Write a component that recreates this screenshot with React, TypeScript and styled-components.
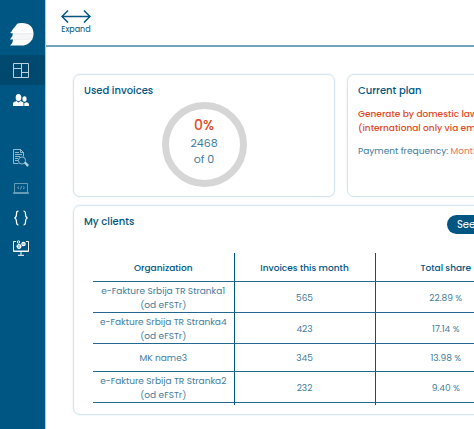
import React from "react";
import styled, { createGlobalStyle } from "styled-components";

const navy = "#005682";
const softNavy = "#3f7c9c";
const orange = "#e34a26";

const GlobalStyle = createGlobalStyle`
  *, *::before, *::after { box-sizing: border-box; }
  body {
    margin: 0;
    overflow-x: hidden;
    background: #fff;
    color: ${navy};
    font-family: Poppins, Inter, "Liberation Sans", sans-serif;
    font-size: 10px;
  }
`;

const Shell = styled.div`
  display: grid;
  grid-template-columns: 46px minmax(0, 1fr);
  min-height: 100vh;
`;

const Sidebar = styled.nav`
  display: flex;
  flex-direction: column;
  background: ${navy};
  border-right: 1px solid #9bd0e6;
`;

const Logo = styled.a`
  display: flex;
  justify-content: center;
  padding: 23px 1px 8px 0;
  height: 55px;
`;

const NavGroup = styled.div`
  display: flex;
  flex-direction: column;

  & + & {
    margin-top: 28px;
  }
`;

const NavLink = styled.a<{ $active?: boolean }>`
  display: flex;
  align-items: center;
  justify-content: center;
  height: 30px;
  padding-right: 4px;
  color: #fff;
  background: ${(p) => (p.$active ? "#00486d" : "transparent")};
`;

const Main = styled.main`
  min-width: 0;
`;

const TopBar = styled.header`
  display: flex;
  align-items: flex-start;
  height: 47px;
  padding: 9px 15px 0;
  border-bottom: 2px solid #6fa3be;
`;

const ExpandButton = styled.button`
  display: flex;
  flex-direction: column;
  align-items: center;
  gap: 1px;
  padding: 0;
  border: 0;
  background: none;
  color: ${navy};
  font: inherit;
  font-size: 8px;
  line-height: 12px;
  cursor: pointer;
`;

const Board = styled.div`
  display: grid;
  grid-template-columns: minmax(262px, 7fr) minmax(189px, 5fr);
  gap: 8px 12px;
  padding: 27px;
`;

const Card = styled.section<{ $wide?: boolean }>`
  min-width: 0;
  padding: 9px 10px;
  border: 1px solid #d3e4ed;
  border-radius: 7px;
  box-shadow: 0 0 2px #dcebf3;
  ${(p) => p.$wide && "grid-column: 1 / -1;"}
`;

const CardTitle = styled.h2`
  margin: 0;
  font-size: 10px;
  font-weight: 500;
  line-height: 14px;
`;

const Gauge = styled.div`
  display: flex;
  flex-direction: column;
  align-items: center;
  justify-content: center;
  width: 85px;
  height: 85px;
  margin: 4px auto 0;
  padding-bottom: 8px;
  border: 7px solid #d6d6d6;
  border-radius: 50%;
  color: ${softNavy};
  font-size: 11px;
  line-height: 16px;
`;

const Percent = styled.strong`
  color: ${orange};
  font-size: 14px;
  font-weight: 500;
  line-height: 20px;
`;

const Plan = styled.p<{ $accent?: boolean }>`
  margin: 9px 0 0;
  white-space: nowrap;
  font-size: 9px;
  line-height: 14px;
  font-weight: ${(p) => (p.$accent ? 500 : 400)};
  color: ${(p) => (p.$accent ? orange : softNavy)};

  span {
    color: #e8745a;
  }
`;

const CardHeader = styled.div`
  display: flex;
  justify-content: space-between;
  padding: 0 9px 0 0;
`;

const PillButton = styled.button`
  height: 19px;
  padding: 0 10px;
  min-width: 69px;
  border: 0;
  border-radius: 10px;
  background: ${navy};
  color: #fff;
  font: inherit;
  text-align: left;
  cursor: pointer;
`;

const TableArea = styled.div`
  padding: 19px 9px 0;
`;

const Table = styled.table`
  width: 100%;
  table-layout: fixed;
  border-collapse: collapse;

  th,
  td {
    padding: 2px 0 0;
    height: 28px;
    text-align: center;
    font-size: 9px;
    line-height: 14px;
    border-bottom: 1px solid #22698f;
    color: ${softNavy};
  }

  th {
    color: ${navy};
    font-weight: 500;
    white-space: nowrap;
  }

  th + th,
  td + td {
    border-left: 1px solid ${navy};
  }

  tfoot td {
    height: 3px;
    padding: 0;
    border-bottom: 0;
  }
`;

const LogoMark = () => (
  <svg width="24" height="23" viewBox="0 0 24 23" aria-hidden="true">
    <path d="M7 1Q8 0 12 0C19 0 23.500 4 23.500 10.500H3L0 10q1.500-1 3-4Q5 4 7 1z" fill="#fff" />
    <path d="M3 10h20.500q.2 3.500-1.200 6.500H0q3-3 3-6.500z" fill="#f4f6f7" />
    <path d="M3 16h19.300C20 20 17 22.500 12 22.500H0Q3 20 3 16z" fill="#fff" />
    <path d="M4 10.500Q12 11.500 23 10.500M4 16.500q8 .5 18-.5" fill="none" stroke="#dfe4e7" strokeWidth=".6" />
  </svg>
);

const DashboardIcon = () => (
  <svg width="16" height="15" viewBox="0 0 16 15" fill="none" stroke="#b9d2df" aria-hidden="true">
    <path d="M.5.5h15v14H.5zM8.500 .5v14M.5 5.500h8M8.500 9.500h7" />
  </svg>
);

const UsersIcon = () => (
  <svg width="16" height="13" viewBox="0 0 16 13" fill="#fff" aria-hidden="true">
    <ellipse cx="5.500" cy="3.500" rx="2.800" ry="3.500" />
    <path d="M0 12V9.500C0 8 2 7.500 3.500 7L5.500 8.500 7.500 7C9 7.500 10.500 8 10.500 9.500V12z" />
    <ellipse cx="11.500" cy="5" rx="2.100" ry="2.800" />
    <path d="M10 8.200l1.500 1 1.700-1c1.800.4 2.800 1 2.800 2.300V12h-4.700V9.500z" />
  </svg>
);

const SearchDocIcon = () => (
  <svg width="16" height="18" viewBox="0 0 16 18" fill="none" stroke="#b9d2df" strokeWidth=".8" aria-hidden="true">
    <path d="M5.500 14.500H.5V.5h7l3 3v4M7.500.5v3h3M2 3.500h4M2 5.500h7M2 7.500h5M2 9.500h3M2 11.500h3" />
    <circle cx="9" cy="11.500" r="3.600" />
    <path d="M11.500 14l1-1 3 3-1.200 1.400z" fill="#b9d2df" />
  </svg>
);

const LaptopIcon = () => (
  <svg width="16" height="11" viewBox="0 0 16 11" fill="none" stroke="#7fadc4" strokeWidth=".8" aria-hidden="true">
    <path d="M1.500 9V.5h13V9M.5 9.500h15v1H.5zM6 3.500L4.500 4.700 6 6M10 3.500l1.500 1.200L10 6M8.600 3L7.400 6.500" />
  </svg>
);

const BracesIcon = () => (
  <svg width="14" height="16" viewBox="0 0 14 16" fill="none" stroke="#fff" strokeWidth="1.200" aria-hidden="true">
    <path d="M4.500 1C2.500 1 2.500 2 2.500 4S2.500 7.500.5 8c2 .5 2 2 2 4s0 3 2 3M9.500 1c2 0 2 1 2 3s0 3.500 2 4c-2 .5-2 2-2 4s0 3-2 3" />
  </svg>
);

const MonitorIcon = () => (
  <svg width="16" height="16" viewBox="0 0 16 16" fill="none" stroke="#fff" aria-hidden="true">
    <path d="M3 1.500H.5v10h15v-10H13M.5 11h15M8 12v3M5 15.300h6" />
    <circle cx="6" cy="6.500" r="1.800" strokeWidth="1.300" />
    <circle cx="10.500" cy="4" r="1.600" strokeWidth="1.200" />
    <circle cx="5.500" cy="2" r="1.200" />
    <path d="M6 4v5M3.500 6.500h5M10.500 2v4M8.500 4h4" strokeWidth=".6" />
  </svg>
);

const ExpandIcon = () => (
  <svg width="30" height="14" viewBox="0 0 30 14" fill="none" stroke="currentColor" strokeWidth="1.500" aria-hidden="true">
    <path d="M1 7.500h28M7 1.500l-6 6 6 6M23 1.500l6 6-6 6" />
  </svg>
);

const clients = [
  { name: "e-Fakture Srbija TR Stranka1", note: "(od eFSTr)", invoices: 565, share: "22.89 %" },
  { name: "e-Fakture Srbija TR Stranka4", note: "(od eFSTr)", invoices: 423, share: "17.14 %" },
  { name: "MK name3", invoices: 345, share: "13.98 %" },
  { name: "e-Fakture Srbija TR Stranka2", note: "(od eFSTr)", invoices: 232, share: "9.40 %" },
];

export default function App() {
  return (
    <>
      <GlobalStyle />
      <Shell>
        <Sidebar aria-label="Main">
          <Logo href="#home" aria-label="Home"><LogoMark /></Logo>
          <NavGroup>
            <NavLink href="#dashboard" $active aria-label="Dashboard"><DashboardIcon /></NavLink>
            <NavLink href="#clients" aria-label="Clients"><UsersIcon /></NavLink>
          </NavGroup>
          <NavGroup>
            <NavLink href="#search" aria-label="Search documents"><SearchDocIcon /></NavLink>
            <NavLink href="#console" aria-label="Console"><LaptopIcon /></NavLink>
            <NavLink href="#api" aria-label="API"><BracesIcon /></NavLink>
            <NavLink href="#system" aria-label="System"><MonitorIcon /></NavLink>
          </NavGroup>
        </Sidebar>
        <Main>
          <TopBar>
            <ExpandButton type="button"><ExpandIcon />Expand</ExpandButton>
          </TopBar>
          <Board>
            <Card>
              <CardTitle>Used invoices</CardTitle>
              <Gauge>
                <Percent>0%</Percent>
                <span>2468</span>
                <span>of 0</span>
              </Gauge>
            </Card>
            <Card>
              <CardTitle>Current plan</CardTitle>
              <Plan $accent>Generate by domestic law<br />(international only via email)</Plan>
              <Plan>Payment frequency: <span>Monthly</span></Plan>
            </Card>
            <Card $wide>
              <CardHeader>
                <CardTitle>My clients</CardTitle>
                <PillButton type="button">See all</PillButton>
              </CardHeader>
              <TableArea>
                <Table>
                  <thead>
                    <tr>
                      <th scope="col">Organization</th>
                      <th scope="col">Invoices this month</th>
                      <th scope="col">Total share</th>
                    </tr>
                  </thead>
                  <tbody>
                    {clients.map((c) => (
                      <tr key={c.name}>
                        <td>{c.name}{c.note && <><br />{c.note}</>}</td>
                        <td>{c.invoices}</td>
                        <td>{c.share}</td>
                      </tr>
                    ))}
                  </tbody>
                  <tfoot>
                    <tr><td /><td /><td /></tr>
                  </tfoot>
                </Table>
              </TableArea>
            </Card>
          </Board>
        </Main>
      </Shell>
    </>
  );
}
